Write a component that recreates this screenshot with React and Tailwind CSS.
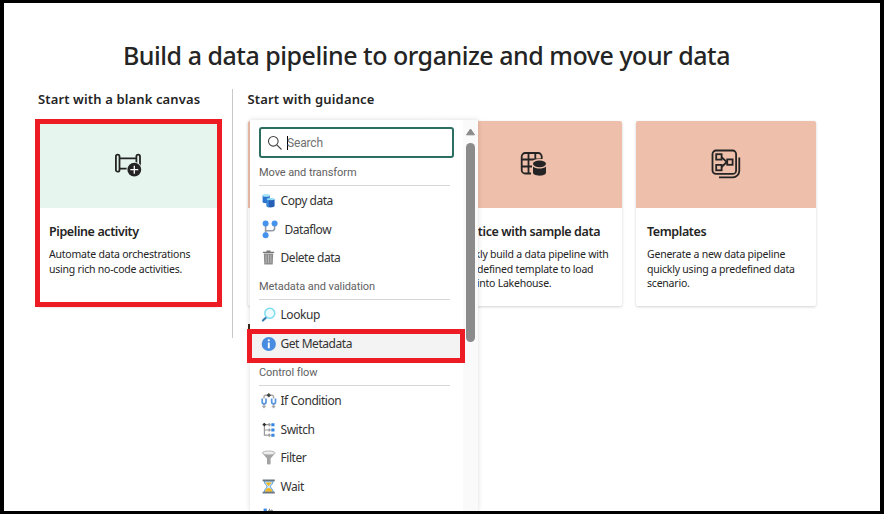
import React from "react";

const ink = "#242424";

function PipelineIcon() {
  return (
    <svg width="30" height="28" viewBox="0 0 30 28" fill="none" stroke={ink} strokeWidth="1.8" className="ml-[2px]">
      <rect x="1.9" y="3.7" width="3.6" height="17" rx="1.8" />
      <rect x="22.4" y="3.7" width="3.6" height="17" rx="1.8" />
      <path d="M5.6 7.4H22.4M5.6 17.6H14" />
      <circle cx="20.3" cy="18.7" r="7.8" fill="#e6f6ef" stroke="none" />
      <circle cx="20.3" cy="18.7" r="6.9" fill={ink} stroke="none" />
      <path d="M20.3 14.7V22.7M16.3 18.7H24.3" stroke="#fff" strokeWidth="1.3" />
    </svg>
  );
}

function SampleIcon() {
  return (
    <svg width="28" height="28" viewBox="0 0 28 28" fill="none" stroke={ink} strokeWidth="1.8" className="ml-[2px]">
      <path d="M12 22.5H6.2a3.5 3.5 0 0 1-3.5-3.5V5.5A3.5 3.5 0 0 1 6.2 2h13a3.5 3.5 0 0 1 3.5 3.5V8" />
      <path d="M2.7 8.5H22M2.7 15.5H13M9.5 1.7V22.7M16.3 1.7V9" />
      <path d="M14 12.5c0-4.6 13-4.6 13 0v9c0 4.6-13 4.6-13 0z" fill="#eebfab" stroke="#eebfab" strokeWidth="2" />
      <ellipse cx="20.5" cy="12.8" rx="6.5" ry="3.4" fill={ink} stroke="none" />
      <path d="M14 15.4c2.8 2.7 10.2 2.7 13 0v6.2c0 4.2-13 4.2-13 0z" fill={ink} stroke="none" />
    </svg>
  );
}

function TemplatesIcon() {
  return (
    <svg width="30" height="30" viewBox="0 0 30 30" fill="none" stroke={ink} strokeWidth="1.8" className="-mt-[2px]">
      <rect x="1.5" y="1.5" width="23.6" height="23.4" rx="3.5" />
      <path d="M28.3 8.5V21.8a6.5 6.5 0 0 1-6.5 6.5H8" />
      <rect x="5.2" y="5.2" width="5.4" height="5.4" />
      <rect x="5.2" y="15.9" width="5.4" height="5.4" />
      <rect x="16.2" y="10.4" width="5.4" height="5.4" />
      <path d="M10.6 8.2L15.8 13L10.6 18" />
    </svg>
  );
}

function MenuIcon({ name }) {
  const icons = {
    copy: (
      <>
        <path d="M1.6 2.2v6.8c0 1.6 7.2 1.6 7.2 0V2.2z" fill="#2b74cf" />
        <ellipse cx="5.2" cy="2.2" rx="3.6" ry="1.5" fill="#a9e6f7" />
        <path d="M5.6 6.2v6.9c0 1.8 8 1.8 8 0V6.2z" fill="#2560b6" />
        <path d="M5.6 6.2v6.9c0 .8 1 1.1 2.2 1.3V6.2z" fill="#3d8bdd" />
        <ellipse cx="9.6" cy="6.1" rx="4" ry="1.2" fill="#8fd9f4" />
      </>
    ),
    flow: (
      <>
        <path d="M4.6 2v11M4.6 8.8h6.5a2.5 2.5 0 0 0 2.5-2.5V2" fill="none" stroke="#949ba5" strokeWidth="1.6" />
        <circle cx="4.6" cy="1.4" r="3" fill="#4693ee" />
        <circle cx="13.6" cy="1.4" r="3" fill="#4693ee" />
        <circle cx="4.6" cy="13.3" r="3" fill="#4693ee" />
      </>
    ),
    trash: (
      <>
        <path d="M2.8 3.4h9.4l-.5 11H3.3z" fill="#8c8c8c" />
        <path d="M1.9 2.3h11.2M5.5 1.1h4" stroke="#777" strokeWidth="1.3" />
        <path d="M5.1 4.5v8.6M7.5 4.5v8.6M9.9 4.5v8.6" stroke="#c4c4c4" strokeWidth=".8" />
      </>
    ),
    lookup: (
      <>
        <path d="M5.6 9.9L1.9 13.6" stroke="#397cac" strokeWidth="2.1" strokeLinecap="round" />
        <circle cx="8.8" cy="6.2" r="5" fill="#eefcff" stroke="#7bdcf3" strokeWidth="1.5" />
      </>
    ),
    info: (
      <>
        <circle cx="7.8" cy="8" r="7.1" fill="#478ce0" />
        <circle cx="7.8" cy="4.3" r="1.1" fill="#fff" />
        <path d="M7.8 6.5v5.8" stroke="#fff" strokeWidth="1.9" />
      </>
    ),
    condition: (
      <>
        <path d="M3 6V3.8c0-1 .6-1.5 1.5-1.5h6.6c.9 0 1.5.5 1.5 1.5V6M3 10.5v4M12.6 10.5v4" fill="none" stroke="#aaa" strokeWidth="1.5" />
        <path d="M7.8 0l2.3 2.3-2.3 2.3-2.3-2.3z" fill="#484848" />
        <path d="M1.2 5.6v3.7c0 2 3.8 2 3.8 0V5.6M10.7 5.6v3.7c0 2 3.8 2 3.8 0V5.6" fill="#fff" stroke="#5795df" strokeWidth="1.7" />
        <path d="M1.4 12.9L3 14.7l1.6-1.8M11 12.9l1.6 1.8 1.6-1.8" fill="none" stroke="#aaa" strokeWidth="1.2" />
      </>
    ),
    switch: (
      <>
        <path d="M3.4 2.7v10.5h5.8M3.4 8h5.8M3.4 2.7h5.8M7.7 1.3l1.5 1.4L7.7 4.1M7.7 6.6L9.2 8 7.7 9.4M7.7 11.8l1.5 1.4-1.5 1.4" fill="none" stroke="#999" strokeWidth="1.2" />
        <path d="M1.3 2.6l2-1.9 2 1.9-2 1.9z" fill="#333" />
        <path d="M10.3 1.2h3.2v3h-3.2zM10.3 6.5h3.2v3h-3.2zM10.3 11.7h3.2v3h-3.2z" fill="#3987e5" />
      </>
    ),
    filter: (
      <>
        <path d="M1.4 3.2L6 8.5v5.2c0 1.1 3.6 1.1 3.6 0V8.5l4.6-5.3z" fill="#a3a3a3" />
        <ellipse cx="7.8" cy="2.9" rx="6.3" ry="1.9" fill="#eee" stroke="#b6b6b6" />
      </>
    ),
    wait: (
      <>
        <path d="M3.2 2h9c0 3-2.7 4-2.7 5.5s2.7 3 2.7 5.5h-9C3.2 10.5 5.9 9 5.9 7.5S3.2 5 3.2 2z" fill="#c3e4fa" stroke="#579bd4" />
        <path d="M4.5 3.5h6.4L7.7 6.9zM4 12.7c.4-2.2 2.2-3.6 3.7-3.6s3.3 1.4 3.7 3.6z" fill="#f4b61e" />
        <path d="M1.6 1.4h12.2M1.6 13.6h12.2" stroke="#6b7780" strokeWidth="1.6" />
      </>
    ),
    until: (
      <>
        <path d="M2.6 .6h3.2v3.2H2.6z" fill="#3987e5" />
        <path d="M7 2.5h5M8.5 .5v7M10.5 1.5v6" fill="none" stroke="#999" />
      </>
    ),
  };
  return (
    <svg width="16" height="18" viewBox="0 -1 16 18" className="shrink-0 overflow-visible">
      {icons[name]}
    </svg>
  );
}

function Card({ color, icon, title, lines }) {
  return (
    <div className="w-[180px] h-[185px] shrink-0 rounded-[2px] bg-white shadow-[0_1px_3px_rgba(0,0,0,0.18)]">
      <div className={"h-[87px] rounded-t-[2px] flex items-center justify-center " + color}>{icon}</div>
      <div className="pl-[11px] pt-[15px] whitespace-nowrap">
        <h3 className="text-[12.5px] leading-[18px] font-semibold tracking-[-0.4px]">{title}</h3>
        <div className="mt-[6px] text-[10.5px] leading-[14.5px] tracking-[-0.22px]">
          {lines.map((l) => (
            <p key={l}>{l}</p>
          ))}
        </div>
      </div>
    </div>
  );
}

function Section({ title, className, items }) {
  return (
    <section>
      <h4 className={"ml-[9px] mr-[13px] pt-[3px] border-b border-[#d6d6d6] font-[Roboto,sans-serif] text-[11px] tracking-[-0.08px] text-[#616161] flex items-center " + className}>{title}</h4>
      <ul className="pt-px">
        {items.map(([icon, label, cls]) => (
          <li key={label} className={"h-[28.6px] flex items-center pl-[11px] gap-[3.5px] text-[12px] tracking-[-0.45px] text-[#333] whitespace-nowrap " + (icon === "info" ? "bg-[#f3f3f3]" : "")}>
            <MenuIcon name={icon} />
            <span className={cls}>{label}</span>
          </li>
        ))}
      </ul>
    </section>
  );
}

function ActivityMenu() {
  return (
    <div className="absolute left-[246px] top-[117px] w-[228px] h-[391px] flex bg-white shadow-[0_0_5px_rgba(0,0,0,0.14)]">
      <div className="w-[213px] h-full overflow-hidden pt-[7px]">
        <div className="ml-[9px] w-[195px] h-[31px] border-2 border-[#2c6e60] rounded-[3px] flex items-center pl-[6px] font-[Roboto,sans-serif] text-[12px] tracking-[-0.15px] text-[#707070]">
          <svg width="16" height="16" viewBox="0 0 16 16" fill="none" stroke="#424242" strokeWidth="1.1">
            <circle cx="6.3" cy="6.3" r="4.8" />
            <path d="M9.8 9.8L14.5 14.5" />
          </svg>
          <span className="ml-[4px] h-[14px] w-px bg-black" />
          <span className="-ml-px">Search</span>
        </div>
        <Section
          title="Move and transform"
          className="h-[28px]"
          items={[["copy", "Copy data", ""], ["flow", "Dataflow", "ml-[4px]"], ["trash", "Delete data", ""]]}
        />
        <Section
          title="Metadata and validation"
          className="h-[27.3px]"
          items={[["lookup", "Lookup", ""], ["info", "Get Metadata", ""]]}
        />
        <Section
          title="Control flow"
          className="h-[27.6px]"
          items={[["condition", "If Condition", ""], ["switch", "Switch", ""], ["filter", "Filter", ""], ["wait", "Wait", ""], ["until", "", ""]]}
        />
      </div>
      <div className="w-[15px] bg-[#fafafa] flex flex-col items-center pt-[8px]">
        <svg width="11" height="8" viewBox="0 0 11 8">
          <path d="M5.5 1L9.5 6.8H1.5z" fill="#8b8b8b" stroke="#8b8b8b" strokeLinejoin="round" />
        </svg>
        <div className="mt-[7px] w-[9px] h-[199px] rounded-full bg-[#8b8b8b]" />
      </div>
    </div>
  );
}

export default function App() {
  return (
    <div className="w-[884px] h-[514px] overflow-hidden bg-white border-x-4 border-t-3 border-b-3 border-black text-[#242424] font-['Noto_Sans',sans-serif]">
      <main className="relative h-full overflow-hidden">
        <h1 className="pt-[35px] pl-[119px] text-[25px] leading-[34px] font-medium tracking-[-0.48px] whitespace-nowrap">Build a data pipeline to organize and move your data</h1>
        <div className="flex pt-[17px] pl-[34px]">
          <section className="w-[195px] h-[249px] border-r border-[#c8c8c8]">
            <h2 className="text-[13px] leading-[20px] h-[32px] font-semibold tracking-[0.13px] whitespace-nowrap">Start with a blank canvas</h2>
            <Card
              color="bg-[#e6f6ef]"
              icon={<PipelineIcon />}
              title="Pipeline activity"
              lines={["Automate data orchestrations", "using rich no-code activities."]}
            />
          </section>
          <section className="pl-[15px]">
            <h2 className="text-[13px] leading-[20px] h-[32px] font-semibold tracking-[0.16px] -ml-[0.5px] whitespace-nowrap">Start with guidance</h2>
            <div className="flex gap-[14px]">
              <Card color="bg-[#eebfab]" icon={null} title="" lines={[]} />
              <Card
                color="bg-[#eebfab]"
                icon={<SampleIcon />}
                title="Practice with sample data"
                lines={["Quickly build a data pipeline with", "a predefined template to load", "data into Lakehouse."]}
              />
              <Card
                color="bg-[#eebfab]"
                icon={<TemplatesIcon />}
                title="Templates"
                lines={["Generate a new data pipeline", "quickly using a predefined data", "scenario."]}
              />
            </div>
            <div className="mt-[18px] w-[2px] h-[10px] bg-[#3a2a1c]" />
          </section>
        </div>
        <div className="absolute left-[31px] top-[116px] w-[187px] h-[188px] border-[5px] border-[#ed1c24]" />
        <ActivityMenu />
        <div className="absolute left-[243px] top-[326px] w-[218px] h-[34px] border-[5px] border-[#ed1c24]" />
      </main>
    </div>
  );
}
